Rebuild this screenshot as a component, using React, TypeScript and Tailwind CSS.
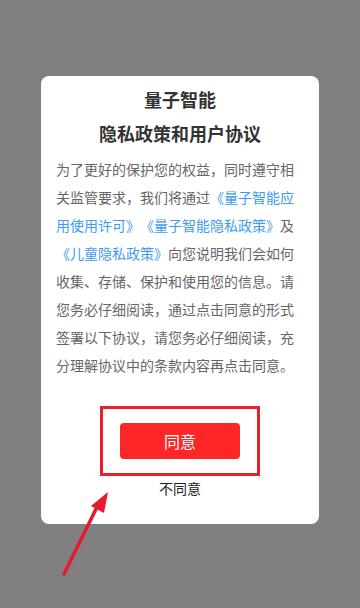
export default function App() {
  const link = "text-[#3d9bf4]";
  return (
    <div
      className="relative w-[360px] h-[608px] bg-[#808080] overflow-hidden pt-[76px]"
      style={{ fontFamily: '"Noto Sans CJK SC", "Noto Sans", sans-serif' }}
    >
      <div className="mx-[41px] w-[278px] h-[448px] bg-white rounded-lg px-[15px] pt-[6px] flex flex-col items-center">
        <h1 className="text-[18px] leading-[34px] font-bold text-[#333]">量子智能</h1>
        <h2 className="text-[18px] leading-[34px] font-bold text-[#333]">隐私政策和用户协议</h2>
        <p className="mt-[5px] w-[248px] text-[14px] leading-[28px] text-[#666] [text-spacing-trim:space-all]">
          为了更好的保护您的权益，同时遵守相关监管要求，我们将通过
          <span className={link}>《量子智能应用使用许可》</span>
          <span className={link}>《量子智能隐私政策》</span>及
          <span className={link}>《儿童隐私政策》</span>
          向您说明我们会如何收集、存储、保护和使用您的信息。请您务必仔细阅读，通过点击同意的形式签署以下协议，请您务必仔细阅读，充分理解协议中的条款内容再点击同意。
        </p>
        <div className="mt-[27px] w-[160px] h-[70px] border-[3px] border-[#e8202a] flex items-center justify-center">
          <button className="w-[120px] h-[36px] rounded-[4px] bg-[#fe2626] text-white text-[16px] leading-[36px]">
            同意
          </button>
        </div>
        <div className="mt-[2px] text-[14px] leading-[20px] text-[#222]">不同意</div>
      </div>
      <svg className="absolute left-0 top-0 pointer-events-none" width="360" height="608" viewBox="0 0 360 608">
        <line x1="64" y1="574" x2="98" y2="505" stroke="#e8192c" strokeWidth="3.5" strokeLinecap="round" />
        <polygon points="108,492 91,506 104,513" fill="#e8192c" />
      </svg>
    </div>
  );
}
